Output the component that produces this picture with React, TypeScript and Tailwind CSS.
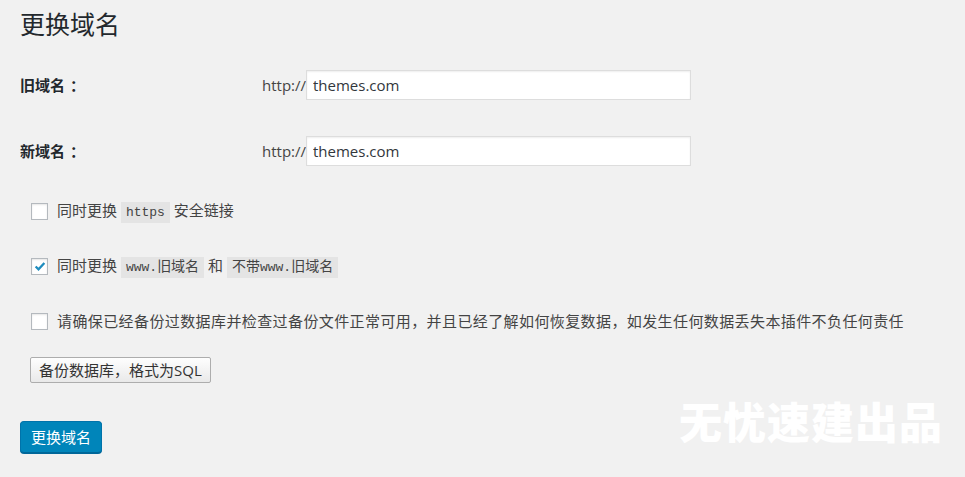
import { useState } from 'react';

const cjk = '"Segoe UI", "Open Sans", "Noto Sans CJK SC", sans-serif';
const mono = '"Liberation Mono", "DejaVu Sans Mono", "Noto Sans CJK SC", monospace';

function Code({ children }: { children: React.ReactNode }) {
  return (
    <code
      className="bg-[#e4e4e4] px-[5px] py-[3px] text-[13px] text-[#444]"
      style={{ fontFamily: mono }}
    >
      {children}
    </code>
  );
}

// 代码块里的中文稍大一点
function Han({ children }: { children: React.ReactNode }) {
  return (
    <span className="text-[14px]" style={{ fontFamily: cjk }}>
      {children}
    </span>
  );
}

function Check({ checked, onChange }: { checked: boolean; onChange: () => void }) {
  return (
    <button
      type="button"
      onClick={onChange}
      className="w-[17px] h-[17px] shrink-0 bg-white border border-[#b4b9be] shadow-[inset_0_1px_2px_rgba(0,0,0,0.1)] flex items-center justify-center"
    >
      {checked && (
        <svg width="14" height="14" viewBox="0 0 16 16">
          <path d="M3 8.5 L6.3 11.8 L13 4.5" fill="none" stroke="#1e8cbe" strokeWidth="2.6" />
        </svg>
      )}
    </button>
  );
}

export default function App() {
  const [oldDomain, setOldDomain] = useState('themes.com');
  const [newDomain, setNewDomain] = useState('themes.com');
  const [https, setHttps] = useState(false);
  const [www, setWww] = useState(true);
  const [backup, setBackup] = useState(false);

  return (
    <main
      className="relative w-[965px] h-[477px] bg-[#f1f1f1] px-[20px] text-[#444] overflow-hidden"
      style={{ fontFamily: cjk }}
    >
      <h1 className="h-[50px] flex items-center text-[25px] text-[#23282d] font-normal">更换域名</h1>

      {/* 旧域名 */}
      <div className="mt-[20px] h-[30px] flex items-center">
        <label className="w-[242px] font-bold text-[15px] text-[#23282d]">
          旧域名<span className="ml-[5px]">：</span>
        </label>
        <span className="text-[15px] w-[44px]">http://</span>
        <input
          value={oldDomain}
          onChange={(e) => setOldDomain(e.target.value)}
          className="w-[385px] h-[30px] bg-white border border-[#ddd] shadow-[inset_0_1px_2px_rgba(0,0,0,0.07)] px-[6px] text-[15px] text-[#32373c] outline-none"
        />
      </div>

      {/* 新域名 */}
      <div className="mt-[36px] h-[30px] flex items-center">
        <label className="w-[242px] font-bold text-[15px] text-[#23282d]">
          新域名<span className="ml-[5px]">：</span>
        </label>
        <span className="text-[15px] w-[44px]">http://</span>
        <input
          value={newDomain}
          onChange={(e) => setNewDomain(e.target.value)}
          className="w-[385px] h-[30px] bg-white border border-[#ddd] shadow-[inset_0_1px_2px_rgba(0,0,0,0.07)] px-[6px] text-[15px] text-[#32373c] outline-none"
        />
      </div>

      <div className="mt-[30px] h-[30px] flex items-center pl-[11px] gap-[9px] text-[15px]">
        <Check checked={https} onChange={() => setHttps(!https)} />
        <span>
          同时更换 <Code>https</Code> 安全链接
        </span>
      </div>

      <div className="mt-[25px] h-[30px] flex items-center pl-[11px] gap-[9px] text-[15px]">
        <Check checked={www} onChange={() => setWww(!www)} />
        <span>
          同时更换 <Code>www.<Han>旧域名</Han></Code> 和 <Code><Han>不带</Han>www.<Han>旧域名</Han></Code>
        </span>
      </div>

      <div className="mt-[25px] h-[30px] flex items-center pl-[11px] gap-[9px] text-[15px]">
        <Check checked={backup} onChange={() => setBackup(!backup)} />
        <span className="tracking-[0.4px]">
          请确保已经备份过数据库并检查过备份文件正常可用，并且已经了解如何恢复数据，如发生任何数据丢失本插件不负任何责任
        </span>
      </div>

      <div className="mt-[21px] pl-[10px]">
        <button
          type="button"
          className="h-[26px] px-[8px] text-[15px] text-[#333] bg-gradient-to-b from-[#fefefe] to-[#e9e9e9] border border-[#adadad] rounded-[2px]"
        >
          备份数据库，格式为SQL
        </button>
      </div>

      <div className="mt-[38px]">
        <button
          type="submit"
          className="h-[32px] w-[82px] text-[15px] text-white bg-[#0085ba] border border-[#0073aa] border-b-[#006799] rounded-[4px] shadow-[0_1px_0_#006799]"
        >
          更换域名
        </button>
      </div>

      {/* watermark */}
      <div
        className="absolute left-[679px] top-[388px] text-[43px] font-black text-white tracking-[1px] select-none"
        style={{ fontFamily: '"Noto Sans CJK SC", sans-serif' }}
      >
        无忧速建出品
      </div>
    </main>
  );
}
